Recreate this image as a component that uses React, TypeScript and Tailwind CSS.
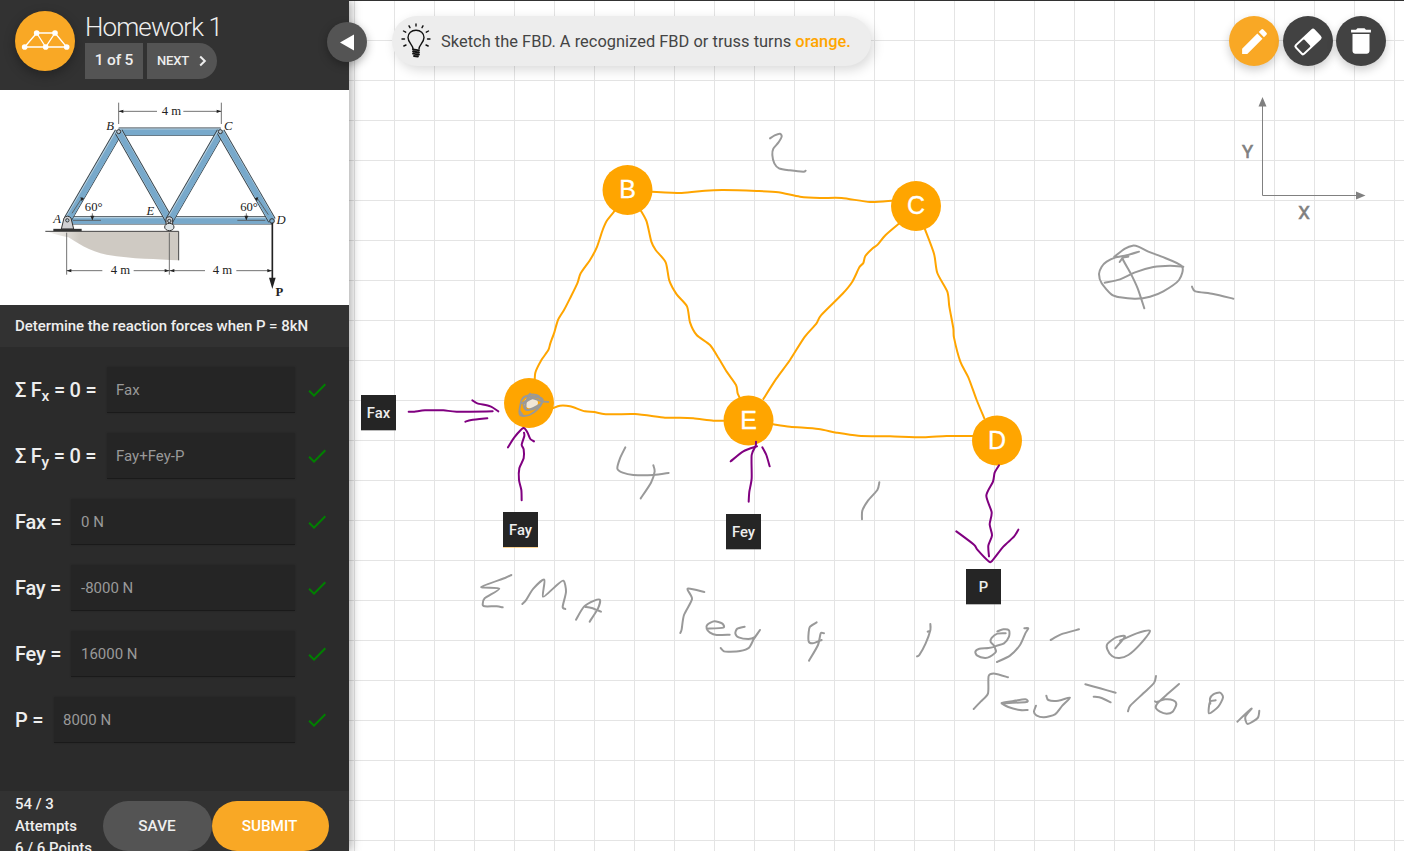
import React from 'react';
import { MdCheck, MdDelete, MdEdit } from 'react-icons/md';

type Point = [number, number];

function parse(points: string): Point[] {
  return points.split(' ').map((pair) => pair.split(',').map(Number) as Point);
}

// Catmull-Rom spline through the recorded pen positions.
function smooth(points: string): string {
  const p = parse(points);
  let d = `M${p[0][0]} ${p[0][1]}`;
  for (let i = 0; i < p.length - 1; i++) {
    const a = p[Math.max(0, i - 1)];
    const b = p[i];
    const c = p[i + 1];
    const e = p[Math.min(p.length - 1, i + 2)];
    d += `C${b[0] + (c[0] - a[0]) / 8} ${b[1] + (c[1] - a[1]) / 8} ${c[0] - (e[0] - b[0]) / 8} ${c[1] - (e[1] - b[1]) / 8} ${c[0]} ${c[1]}`;
  }
  return d;
}

interface InkGroup {
  x: number;
  y: number;
  color: string;
  width: number;
  strokes: string[];
}

// Strokes are stored at three units per pixel, relative to the group origin.
const MEMBERS: InkGroup[] = [
  {
    x: 590, y: 120, color: '#ffa500', width: 6,
    strokes: [
      '185,215 275,219 345,212 400,210 500,213 565,217 630,230 690,234 755,234 840,246 905,242',
      '74,273 50,303 38,330 20,383 0,420 -28,460 -38,490 -60,535 -78,570 -96,600 -107,637 -119,670 -125,690 -147,722 -164,758 -166,795',
      '153,273 170,305 184,365 197,390 227,427 238,482 260,523 291,559 300,607 320,645 360,675 386,715 410,755 438,795 443,820 454,842',
      '928,310 887,345 863,374 849,384 826,408 820,429 808,442 787,485 757,522 693,586 679,611 643,652 600,720 559,776 520,837',
      '1005,328 1032,401 1042,459 1072,515 1078,560 1090,625 1092,653 1111,725 1135,772 1160,840 1183,895',
    ],
  },
  {
    x: 350, y: 350, color: '#ffa500', width: 6,
    strokes: [
      '610,174 630,167 660,169 705,184 733,186 767,193 855,192 945,203 990,203 1030,205 1090,212 1120,212',
      '1270,223 1320,230 1405,237 1460,248 1525,257 1620,259 1720,262 1790,258 1870,258',
    ],
  },
];

const FORCES: InkGroup[] = [
  {
    x: 350, y: 350, color: '#800080', width: 6,
    strokes: [
      '176,185 193,185 225,181 280,181 320,185 428,184',
      '367,151 382,160 421,169 445,184',
      '346,215 364,210 412,205',
      '515,451 514,420 507,390 508,355 521,325 521,298 515,284 523,258 522,248',
      '474,292 493,262 520,234 532,247 541,267 552,274',
    ],
  },
  {
    x: 660, y: 350, color: '#800080', width: 6,
    strokes: [
      '266,455 268,425 275,385 275,315 287,288 288,275',
      '212,334 250,304 291,289',
      '307,292 319,315 329,349',
      '1017,346 1004,368 999,395 979,437 995,487 989,523 996,556 985,587 987,619',
      '889,544 942,584 952,599 985,633 996,633 1030,590 1062,560 1075,539',
    ],
  },
];

const NOTES: InkGroup[] = [
  {
    x: 590, y: 120, color: '#999999', width: 6,
    strokes: ['540,55 554,46 570,41 575,50 565,68 550,86 547,105 553,130 567,145 600,151 640,155 647,152'],
  },
  {
    x: 1080, y: 0, color: '#999999', width: 6,
    strokes: [
      '103,770 135,746 158,737 175,740 205,755 245,770 306,799 297,840 250,874 210,890 167,896 120,892 95,884 65,850 57,822 65,800 80,785 105,773 140,766 177,755',
      '74,848 120,838 165,817 220,801 270,797 310,800',
      '119,786 129,773 145,770 127,774 152,820 173,865 193,925',
      '336,860 346,874 400,882 460,896',
    ],
  },
  {
    x: 350, y: 350, color: '#999999', width: 6,
    strokes: [
      '826,292 810,325 802,356 818,368 850,375 910,375 956,369',
      '910,346 914,364 903,398 872,445',
      '1588,397 1582,420 1554,452 1537,482 1536,508',
      '484,675 465,684 394,711 448,716 404,745 398,763 404,769 440,769 458,772',
      '517,762 527,752 550,716 583,689 579,740 612,713 640,692 648,725 638,770 646,777',
      '678,809 702,770 733,752 750,750 744,775 719,815',
      '706,771 725,774 753,785',
    ],
  },
  {
    x: 660, y: 570, color: '#999999', width: 6,
    strokes: [
      '133,66 83,56 96,87 72,135 65,178 61,189',
      '140,176 190,173 186,160 163,154 142,164 140,176 150,188 170,195 209,194',
      '254,170 232,176 226,190 236,202 265,207 283,202 300,180 281,208 267,233 240,243 210,245 192,244 182,234',
      '470,157 450,170 446,187 446,214 458,220 485,210',
      '492,190 482,190 474,225 447,272',
      '803,185 811,181 811,162 811,181 797,220 778,255 771,259',
    ],
  },
  {
    x: 960, y: 570, color: '#999999', width: 6,
    strokes: [
      '112,184 130,178 147,181 147,200 132,220 105,230 108,245 90,260 75,264 52,257 46,245 58,236 85,234 103,229 92,216 95,204 112,191 137,190',
      '193,175 205,175 196,190 180,225 150,257 111,276',
      '272,210 303,193 357,178',
      '466,235 495,199 468,202 442,222 442,238 456,258 478,264 505,255 540,223 570,182 530,190 480,212',
      '144,322 105,311 86,318 84,370 62,395 41,417',
      '125,400 199,396 196,388 160,393 125,399 145,411 180,420 203,420',
      '259,377 265,390 295,392 330,383 307,407 285,433 252,442 229,436 222,425 228,407',
      '376,343 420,355 467,368',
      '401,380 425,384 452,397',
      '588,318 582,339 550,370 511,407 504,424',
      '657,342 625,370 595,397 587,412 600,425 620,431 638,425 649,403 640,391 615,388 590,396 585,394',
      '751,401 750,386 760,373 780,368 789,382 775,410 747,430 750,395 767,391',
      '832,455 865,424 875,416 856,440 863,462 893,444 898,422',
    ],
  },
  {
    x: 350, y: 350, color: '#999999', width: 5.5,
    strokes: [
      '528,140 542,133 565,137 576,155 563,177 538,195 514,197 508,185 515,150 530,138 575,145 571,163 530,180 521,162 547,145 572,153 595,156',
      '540,131 528,155 530,180 565,172 578,149 548,141 516,160',
      '509,183 520,198',
    ],
  },
];

function Ink({ group }: { group: InkGroup }) {
  return (
    <g
      transform={`translate(${group.x} ${group.y}) scale(0.33333)`}
      fill="none"
      stroke={group.color}
      strokeWidth={group.width}
      strokeLinecap="round"
      strokeLinejoin="round"
    >
      {group.strokes.map((s) => (
        <path key={s} d={smooth(s)} />
      ))}
    </g>
  );
}

const JOINTS = [
  { x: 627.5, y: 190, label: 'B' },
  { x: 916, y: 206, label: 'C' },
  { x: 748.5, y: 420.5, label: 'E' },
  { x: 997, y: 440.5, label: 'D' },
  { x: 529, y: 403, label: '' },
];

const TAGS = [
  { x: 361, y: 395, label: 'Fax', line: '#777' },
  { x: 503, y: 512, label: 'Fay', line: '#f9a825' },
  { x: 726, y: 514, label: 'Fey', line: '#777' },
  { x: 966, y: 569, label: 'P', line: '#777' },
];

function Sketch() {
  return (
    <svg className="absolute inset-0" width="1055" height="851" viewBox="349 0 1055 851">
      <defs>
        <pattern id="grid" x="354" y="0" width="40" height="40" patternUnits="userSpaceOnUse">
          <path d="M0.5 0V40M0 0.5H40" stroke="#e4e4e4" fill="none" />
        </pattern>
      </defs>
      <rect x="349" y="0" width="1055" height="851" fill="url(#grid)" />
      <rect x="349" y="0" width="1055" height="1" fill="#323232" />
      <g stroke="#808080" fill="#808080">
        <path d="M1262.5 104V195.5H1358" fill="none" />
        <path d="M1262.5 97L1266.5 106.5H1258.5ZM1365.500 195.500L1356 191.500V199.500Z" stroke="none" />
      </g>
      <g fill="#808080" stroke="#808080" strokeWidth="0.600" fontFamily="Roboto, sans-serif" fontSize="18.500" textAnchor="middle">
        <text x="1247.500" y="157.800">Y</text>
        <text x="1304" y="218.500">X</text>
      </g>
      {MEMBERS.map((g) => <Ink key={`m${g.x}`} group={g} />)}
      {JOINTS.map((j) => (
        <g key={`${j.x}`}>
          <circle cx={j.x} cy={j.y} r="25" fill="#ffa500" />
          <text x={j.x} y={j.y + 8} fill="#fff" stroke="#fff" strokeWidth="0.300" fontFamily="Liberation Sans, sans-serif" fontSize="25" textAnchor="middle">{j.label}</text>
        </g>
      ))}
      <ellipse cx="531" cy="403" rx="7" ry="5.500" fill="#f0e6d6" />
      {FORCES.map((g) => <Ink key={`f${g.x}`} group={g} />)}
      {NOTES.map((g, i) => <Ink key={i} group={g} />)}
      {TAGS.map((t) => (
        <g key={t.label}>
          <rect x={t.x} y={t.y} width="35" height="35.500" fill={t.line} />
          <rect x={t.x} y={t.y} width="35" height="35" fill="#252525" />
          <text x={t.x + 17.5} y={t.y + 22.500} fill="#eee" fontFamily="Roboto, sans-serif" fontSize="14.800" fontWeight="500" textAnchor="middle">{t.label}</text>
        </g>
      ))}
    </svg>
  );
}

function Beam({ x1, y1, x2, y2 }: { x1: number; y1: number; x2: number; y2: number }) {
  const line = { x1, y1, x2, y2 };
  return (
    <g>
      <line {...line} stroke="#2f3b43" strokeWidth="25" />
      <line {...line} stroke="#b3cddd" strokeWidth="20" />
      <line x1={x1 + 1} y1={y1 + 2} x2={x2 + 1} y2={y2 + 2} stroke="#78a9cb" strokeWidth="17" />
    </g>
  );
}

function ProblemFigure() {
  return (
    <svg className="block" width="349" height="215" viewBox="0 0 1047 645" fontFamily="Liberation Serif, serif" fontSize="38" fill="#222">
      <defs>
        <linearGradient id="soil" x1="0" x2="1" y1="0" y2="0">
          <stop offset="0" stopColor="#cfcac3" stopOpacity="0.2" />
          <stop offset="0.25" stopColor="#cfcac3" />
        </linearGradient>
      </defs>
      <path d="M140 424H535V511C470 506 400 508 320 494C270 485 225 455 205 442C185 438 165 434 140 424Z" fill="url(#soil)" />
      <path d="M136 424H536V511" fill="none" stroke="#444" strokeWidth="3" />
      <Beam x1={205} y1={391} x2={816} y2={391} />
      <Beam x1={356} y1={125} x2={662} y2={125} />
      <Beam x1={203} y1={388} x2={356} y2={125} />
      <Beam x1={356} y1={125} x2={508} y2={391} />
      <Beam x1={662} y1={125} x2={508} y2={391} />
      <Beam x1={662} y1={125} x2={816} y2={391} />
      <g fill="#b8cad6" stroke="#333" strokeWidth="3">
        <path d="M184 417L192 384Q202 373 213 384L221 417Z" fill="#d0d0d3" />
        <path d="M498 405V386Q508 374 518 386V405Z" fill="#d0d0d3" />
        <ellipse cx="508" cy="411" rx="14" ry="11" fill="#dde3e6" />
        <circle cx="202" cy="391" r="5" />
        <circle cx="356" cy="125" r="6" />
        <circle cx="661" cy="125" r="6" />
        <circle cx="508" cy="393" r="5" />
        <circle cx="816" cy="393" r="7" fill="#80afcf" />
      </g>
      <path d="M160 420H245" stroke="#333" strokeWidth="7" />
      <g stroke="#555" strokeWidth="2.500" fill="none">
        <path d="M356 38V102M664 38V102M356 64H471M550 64H664M200 428V554M508 428V554M200 542H307M401 542H508M508 542H615M709 542H816M219 391H303M712 391H796M216 370L247 322M770 322L805 374M277 370V390M739 370V390" />
      </g>
      <path d="M356 64L370 59V69ZM664 64L650 59V69ZM200 542L214 537V547ZM508 542L494 537V547ZM509 542L523 537V547ZM816 542L802 537V547ZM277 391L271 377H283ZM739 391L733 377H745ZM241 322L252 325L245 334ZM775 322L764 325L771 334Z" />
      <path d="M817 398V568" stroke="#222" strokeWidth="5" />
      <path d="M817 597L807 563H827Z" />
      <g textAnchor="middle">
        <text x="514" y="76">4 m</text>
        <text x="361" y="553">4 m</text>
        <text x="667" y="553">4 m</text>
        <text x="281" y="364">60°</text>
        <text x="747" y="364">60°</text>
        <text x="838" y="617" fontWeight="bold">P</text>
        <g fontStyle="italic">
          <text x="330" y="119">B</text>
          <text x="685" y="119">C</text>
          <text x="171" y="400">A</text>
          <text x="451" y="374">E</text>
          <text x="843" y="401">D</text>
        </g>
      </g>
    </svg>
  );
}

const FIELDS: { label: React.ReactNode; value: string; key: string; width: string }[] = [
  { key: 'sx', label: <>Σ F<sub className="text-[15.500px]">x</sub> = 0 =</>, value: 'Fax', width: 'w-[188px] pl-[9px]' },
  { key: 'sy', label: <>Σ F<sub className="text-[15.500px]">y</sub> = 0 =</>, value: 'Fay+Fey-P', width: 'w-[188px] pl-[9px]' },
  { key: 'fax', label: 'Fax =', value: '0 N', width: 'w-[224px] pl-[10px]' },
  { key: 'fay', label: 'Fay =', value: '-8000 N', width: 'w-[224px] pl-[10px]' },
  { key: 'fey', label: 'Fey =', value: '16000 N', width: 'w-[224px] pl-[10px]' },
  { key: 'p', label: 'P =', value: '8000 N', width: 'w-[241px] pl-[9px]' },
];

function Sidebar() {
  return (
    <aside className="relative z-10 flex h-full w-[349px] shrink-0 flex-col bg-[#2b2b2b] text-[#eeeeee] shadow-[2px_0_10px_rgba(0,0,0,0.35)]">
      <header className="flex h-[90px] shrink-0 bg-[#323232] pl-[15px] pt-[11px]">
        <div className="flex size-[60px] items-center justify-center rounded-full bg-[#f9a825] shadow-[0_4px_12px_rgba(0,0,0,0.3)]">
          <svg width="60" height="60" viewBox="0 0 180 180">
            <path d="M29 108H155L120 66H65ZM65 66L92 108L120 66M29 108L65 66" fill="none" stroke="#fff" strokeWidth="4" />
            <g fill="#fff">
              <circle cx="29" cy="108" r="8.500" /><circle cx="92" cy="108" r="8.500" /><circle cx="155" cy="108" r="8.500" />
              <circle cx="65" cy="66" r="8.500" /><circle cx="120" cy="66" r="8.500" />
            </g>
          </svg>
        </div>
        <div className="ml-2.5">
          <h1 className="h-8 whitespace-nowrap text-[26px] font-light leading-8 tracking-[-0.9px]">Homework 1</h1>
          <div className="flex gap-1">
            <span className="flex h-9 w-[58px] items-center justify-center whitespace-nowrap bg-[#545454] text-[15.500px] font-medium tracking-[-0.2px]">1 of 5</span>
            <button className="flex h-9 w-[70px] items-center rounded-r-full bg-[#545454] pl-[10px] text-[13px] font-medium tracking-[-0.2px]">
              NEXT
              <svg className="ml-[10px]" width="8" height="12" viewBox="0 0 8 12">
                <path d="M1.200 1.500L5.800 6L1.200 10.500" fill="none" stroke="#eee" strokeWidth="2" />
              </svg>
            </button>
          </div>
        </div>
      </header>
      <div className="h-[215px] shrink-0 bg-white"><ProblemFigure /></div>
      <h2 className="flex h-[42px] shrink-0 items-center whitespace-nowrap bg-[#323232] pl-[15px] pt-px text-[15px] font-medium tracking-[-0.05px]">
        Determine the reaction forces when P = 8kN
      </h2>
      <div className="flex flex-1 flex-col gap-5 pl-[15px] pt-5">
        {FIELDS.map((f) => (
          <div key={f.key} className="flex h-[46px] items-center">
            <div className="flex w-[280px] items-center justify-between">
              <label className="whitespace-nowrap text-[20px] font-medium leading-[30px] tracking-[-0.25px]">{f.label}</label>
              <span className={`${f.width} flex h-[46px] items-center border-b border-[#1a1a1a] bg-[#252525] pt-[2px] text-[15px] text-[#999999] shadow-[0_0_2px_rgba(0,0,0,0.2)]`}>{f.value}</span>
            </div>
            <MdCheck className="ml-[10px] size-6 text-[#008000]" />
          </div>
        ))}
      </div>
      <footer className="flex h-[60px] shrink-0 overflow-hidden bg-[#323232] pl-[15px]">
        <div className="mt-[2px] w-[88px] text-[15px] font-medium leading-[22px]">
          <div>54 / 3</div>
          <div>Attempts</div>
          <div className="whitespace-nowrap">6 / 6 Points</div>
        </div>
        <button className="mt-[10px] h-[50px] w-[109px] rounded-full bg-[#545454] pr-px text-[15.300px] font-medium">SAVE</button>
        <button className="mt-[10px] h-[50px] w-[117px] rounded-full bg-[#f9a825] pr-[2px] text-[15.300px] font-medium text-white">SUBMIT</button>
      </footer>
      <button className="absolute left-[327px] top-[22px] flex size-10 items-center justify-center rounded-full bg-[#545454] shadow-[0_3px_10px_rgba(0,0,0,0.3)]">
        <svg width="40" height="40" viewBox="0 0 40 40"><path d="M13 20.500L27 12.500V28.500Z" fill="#fff" /></svg>
      </button>
    </aside>
  );
}

function Bulb() {
  return (
    <svg width="30" height="36" viewBox="0 0 30 36" fill="none" stroke="#111" strokeWidth="1.400" strokeLinecap="round">
      <path d="M12 26C12 22 7 19.500 7 14.500C7 10 10.500 7.200 15 7.200S23 10 23 14.500C23 19.500 18 22 18 26" />
      <path d="M12 26.300L18 27.300M12 28.500L18 29.500M12 30.700L18 31.700M13 33L17 33.500" strokeWidth="1.800" />
      <path d="M15 1V3M8 2.800L9 4.700M22 2.800L21 4.700M2.500 8L4.700 9.200M27.500 8L25.300 9.200M1 16H3.500M29 16H26.500M2.800 23L5 22M27.200 23L25 22" />
    </svg>
  );
}

function Canvas() {
  return (
    <main className="relative h-full flex-1 bg-white">
      <Sketch />
      <div className="relative flex justify-between pl-[43px] pr-[18px] pt-4">
        <div className="flex h-[50px] w-[479px] items-center rounded-full bg-[#ededed] pl-[8.500px] text-[16.400px] text-[#444444] shadow-[3px_4px_12px_rgba(0,0,0,0.15)]">
          <Bulb />
          <span className="ml-[10.500px] whitespace-nowrap pt-[3px] tracking-[0.03px]">Sketch the FBD. A recognized FBD or truss turns <span className="font-medium text-[#ffa500]">orange.</span></span>
        </div>
        <div className="flex gap-[3.500px] text-white">
          <button className="flex size-[50px] items-center justify-center rounded-full bg-[#f9a825] shadow-[0_4px_10px_rgba(0,0,0,0.2)]">
            <MdEdit size={33} />
          </button>
          <button className="flex size-[50px] items-center justify-center rounded-full bg-[#424242] shadow-[0_4px_10px_rgba(0,0,0,0.2)]">
            <svg width="50" height="50" viewBox="0 0 50 50">
              <g transform="translate(25 26) rotate(-43)">
                <rect x="-13.500" y="-7" width="27" height="14" rx="2.500" fill="#fff" />
                <rect x="-11.500" y="-5" width="10.500" height="10" rx="1" fill="#424242" />
              </g>
            </svg>
          </button>
          <button className="flex size-[50px] items-center justify-center rounded-full bg-[#424242] shadow-[0_4px_10px_rgba(0,0,0,0.2)]">
            <MdDelete size={34} />
          </button>
        </div>
      </div>
    </main>
  );
}

export default function App() {
  return (
    <div className="flex h-[851px] w-[1404px] overflow-hidden font-[Roboto,sans-serif]">
      <Sidebar />
      <Canvas />
    </div>
  );
}
